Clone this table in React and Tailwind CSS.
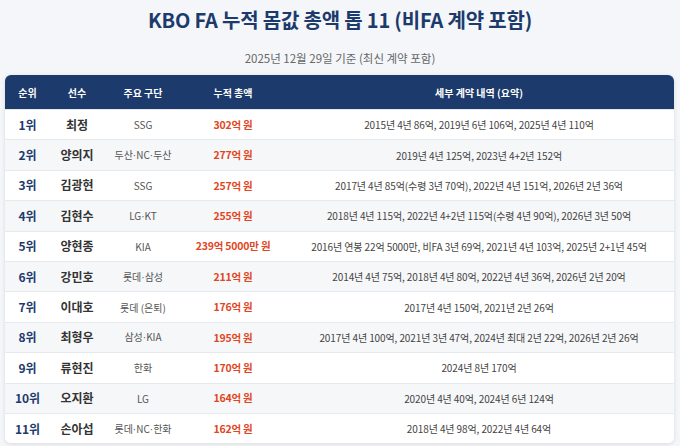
const rows = [
  ["1위", "최정", ["SSG"], "302억 원", "2015년 4년 86억, 2019년 6년 106억, 2025년 4년 110억"],
  ["2위", "양의지", ["두산", "NC", "두산"], "277억 원", "2019년 4년 125억, 2023년 4+2년 152억"],
  ["3위", "김광현", ["SSG"], "257억 원", "2017년 4년 85억(수령 3년 70억), 2022년 4년 151억, 2026년 2년 36억"],
  ["4위", "김현수", ["LG", "KT"], "255억 원", "2018년 4년 115억, 2022년 4+2년 115억(수령 4년 90억), 2026년 3년 50억"],
  ["5위", "양현종", ["KIA"], "239억 5000만 원", "2016년 연봉 22억 5000만, 비FA 3년 69억, 2021년 4년 103억, 2025년 2+1년 45억"],
  ["6위", "강민호", ["롯데", "삼성"], "211억 원", "2014년 4년 75억, 2018년 4년 80억, 2022년 4년 36억, 2026년 2년 20억"],
  ["7위", "이대호", ["롯데 (은퇴)"], "176억 원", "2017년 4년 150억, 2021년 2년 26억"],
  ["8위", "최형우", ["삼성", "KIA"], "195억 원", "2017년 4년 100억, 2021년 3년 47억, 2024년 최대 2년 22억, 2026년 2년 26억"],
  ["9위", "류현진", ["한화"], "170억 원", "2024년 8년 170억"],
  ["10위", "오지환", ["LG"], "164억 원", "2020년 4년 40억, 2024년 6년 124억"],
  ["11위", "손아섭", ["롯데", "NC", "한화"], "162억 원", "2018년 4년 98억, 2022년 4년 64억"],
];

function Teams({ parts }) {
  return (
    <>
      {parts.map((p, i) => (
        <span key={i}>
          {i > 0 && <span style={{ fontFamily: '"Liberation Sans", sans-serif' }}>·</span>}
          {p}
        </span>
      ))}
    </>
  );
}

export default function App() {
  return (
    <div
      className="w-[680px] h-[446px] bg-[#f4f6f9] overflow-hidden"
      style={{ fontFamily: '"Noto Sans CJK KR", "Noto Sans", sans-serif' }}
    >
      <h1 className="text-center text-[20px] font-bold text-[#1d3a6c] pt-[5px] leading-[30px] tracking-[-0.2px]">
        KBO FA 누적 몸값 총액 톱 11 (비FA 계약 포함)
      </h1>
      <p className="text-center text-[11.5px] text-[#666] mt-[15px] leading-[16px]">
        2025년 12월 29일 기준 (최신 계약 포함)
      </p>
      <div className="mx-[5px] mt-[9px] w-[669px] rounded-[6px] bg-white shadow-[0_1px_4px_rgba(0,0,0,0.12)] overflow-hidden">
        <div className="flex h-[34px] items-center bg-[#1c3a6b] text-white text-[10px] font-bold">
          <div className="w-[45px] text-center">순위</div>
          <div className="w-[54px] text-center">선수</div>
          <div className="w-[78px] text-center">주요 구단</div>
          <div className="w-[102px] text-center">누적 총액</div>
          <div className="flex-1 text-center">세부 계약 내역 (요약)</div>
        </div>
        {rows.map((r, i) => (
          <div
            key={i}
            className={`flex h-[30.4px] items-center border-t border-[#e6e9ee] first:border-t-0 ${
              i % 2 === 1 ? "bg-[#f6f7f9]" : "bg-white"
            }`}
          >
            <div className="w-[45px] text-center text-[12px] font-bold text-[#1d3a6c]">{r[0]}</div>
            <div className="w-[54px] text-center text-[12px] font-bold text-[#333]">{r[1]}</div>
            <div className="w-[78px] text-center text-[10px] text-[#555] whitespace-nowrap">
              <Teams parts={r[2]} />
            </div>
            <div className="w-[102px] text-center text-[10.5px] font-bold text-[#e2461f] tracking-[-0.2px] whitespace-nowrap">
              {r[3]}
            </div>
            <div className="flex-1 text-center text-[10px] text-[#444] whitespace-nowrap tracking-[-0.1px]">{r[4]}</div>
          </div>
        ))}
      </div>
    </div>
  );
}
